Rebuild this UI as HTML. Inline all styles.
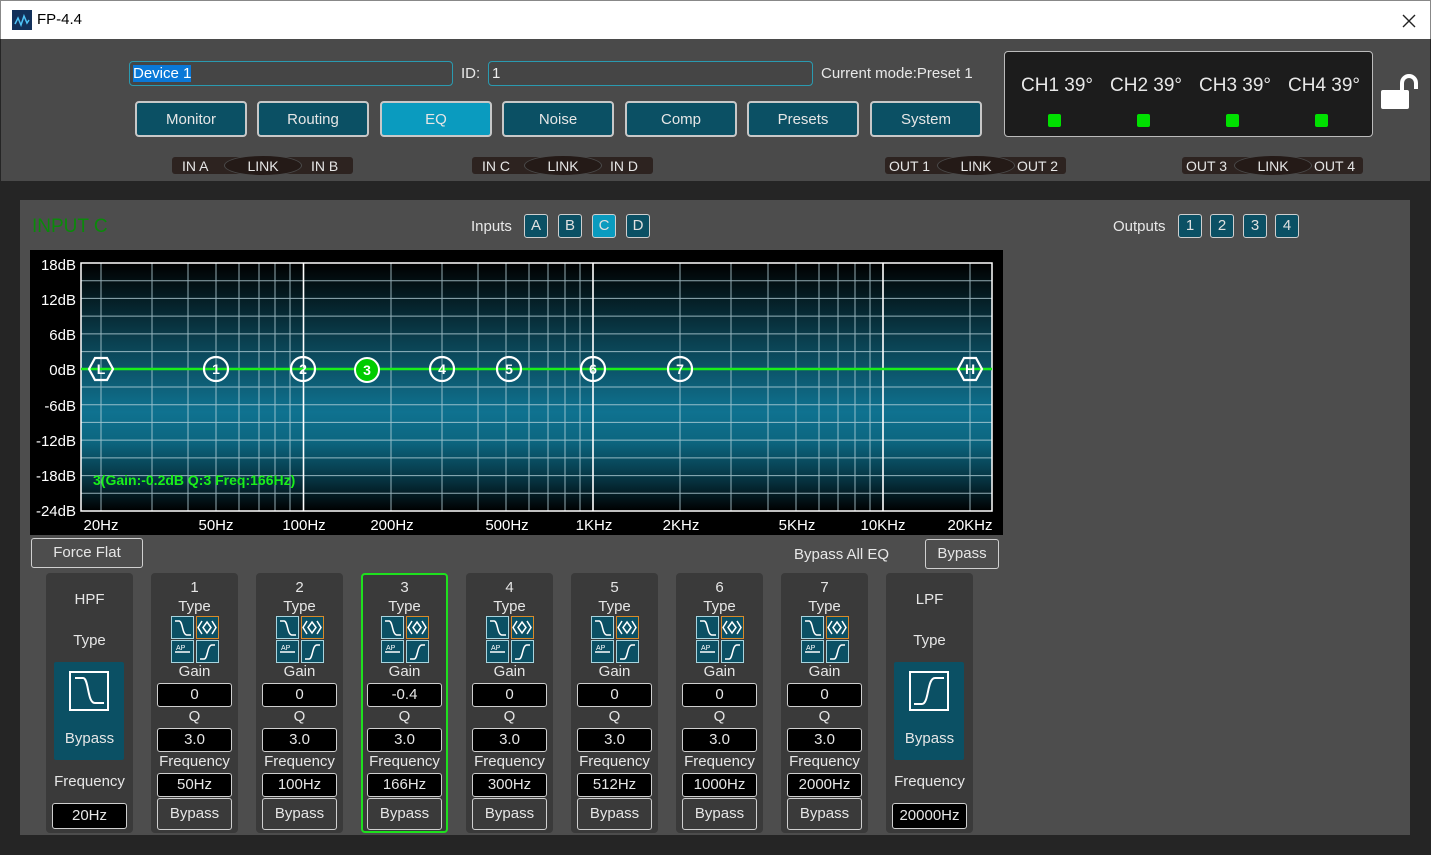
<!DOCTYPE html>
<html><head><meta charset="utf-8">
<style>
*{box-sizing:border-box;margin:0;padding:0}
body{width:1431px;height:855px;background:#252525;font-family:"Liberation Sans","Segoe UI",sans-serif;color:#e8e8e8;position:relative;overflow:hidden;font-size:14px}
.a{position:absolute}
.title{left:0;top:0;width:1431px;height:39px;background:#fff;border:1px solid #888;border-bottom:none}
.top{left:1px;top:39px;width:1429px;height:142px;background:#4a4a4a}
.inp{height:25px;border:1px solid #2a9ab0;border-radius:4px;background:#454545;font-size:15px;padding:3px 3px;color:#eee}
.nav{top:101px;width:112px;height:36px;background:#0b5064;border:2px solid #c8c8c8;border-radius:4px;text-align:center;line-height:34px;font-size:15px;color:#e6e6e6}
.pill{top:157px;height:17px;background:#2d2320;border-radius:3px;font-size:14px;line-height:18px;color:#e6e6e6}
.pill span{position:absolute;top:0}
.lk{position:absolute;top:-2px;height:21px;width:78px;background:#241a17;border-radius:50%;border:1px solid #4a4a4a;text-align:center;line-height:20px}
.main{left:20px;top:200px;width:1390px;height:635px;background:#4d4d4d}
.sq{top:214px;width:24px;height:24px;border:1.5px solid #cfcfcf;border-radius:3px;background:#0b5064;text-align:center;line-height:22px;font-size:15px;color:#e0e0e0}
.btn{border:1.5px solid #d0d0d0;border-radius:3px;text-align:center;color:#e6e6e6;font-size:15px}
.band{top:573px;width:87px;height:260px;background:#3a3a3a;border-radius:4px;text-align:center;font-size:15px;color:#e6e6e6}
.band .l{position:absolute;left:0;width:100%;line-height:20px}
.bx{position:absolute;left:6px;width:75px;height:24px;background:#000;border:1.5px solid #cfcfcf;border-radius:3px;line-height:22px;font-size:15px}
.bp{position:absolute;left:6px;top:225px;width:75px;height:32px;border:1.5px solid #cfcfcf;border-radius:3px;line-height:30px;background:#3a3a3a}
.ic{position:absolute;width:23px;height:23px;background:#0b5064;border:1.5px solid #a8d4de}
</style></head><body>
<div class="a title">
 <svg class="a" style="left:11px;top:9px" width="20" height="20"><rect width="20" height="20" fill="#12305a"/><path d="M3 14 L6 8 L9 15 L12 6 L15 13 L17 10" stroke="#4fc3f7" stroke-width="1.5" fill="none"/></svg>
 <div class="a" style="left:36px;top:10px;font-size:15px;color:#000">FP-4.4</div>
 <svg class="a" style="left:1401px;top:13px" width="14" height="14"><path d="M1 1L13 13M13 1L1 13" stroke="#222" stroke-width="1.4"/></svg>
</div>
<div class="a top"></div>
<div class="a inp" style="left:129px;top:61px;width:324px"><span style="background:#0a78d7;color:#fff">Device 1</span></div>
<div class="a" style="left:461px;top:65px;font-size:15px">ID:</div>
<div class="a inp" style="left:488px;top:61px;width:325px">1</div>
<div class="a" style="left:821px;top:65px;font-size:15px">Current mode:Preset 1</div>
<div class="a nav" style="left:135px">Monitor</div>
<div class="a nav" style="left:257px">Routing</div>
<div class="a nav" style="left:380px;background:#0a9bbf">EQ</div>
<div class="a nav" style="left:502px">Noise</div>
<div class="a nav" style="left:625px">Comp</div>
<div class="a nav" style="left:747px">Presets</div>
<div class="a nav" style="left:870px">System</div>
<div class="a pill" style="left:172px;width:181px"><span style="left:10px">IN A</span><div class="lk" style="left:52px">LINK</div><span style="left:139px">IN B</span></div>
<div class="a pill" style="left:472px;width:181px"><span style="left:10px">IN C</span><div class="lk" style="left:52px">LINK</div><span style="left:138px">IN D</span></div>
<div class="a pill" style="left:885px;width:181px"><span style="left:4px">OUT 1</span><div class="lk" style="left:52px">LINK</div><span style="left:132px">OUT 2</span></div>
<div class="a pill" style="left:1182px;width:181px"><span style="left:4px">OUT 3</span><div class="lk" style="left:52px">LINK</div><span style="left:132px">OUT 4</span></div>
<div class="a" style="left:1004px;top:51px;width:369px;height:86px;background:#1c1c1c;border:1.5px solid #bbb;border-radius:4px"></div>
<div class="a" style="left:1021px;top:75px;font-size:19px">CH1 39°</div>
<div class="a" style="left:1110px;top:75px;font-size:19px">CH2 39°</div>
<div class="a" style="left:1199px;top:75px;font-size:19px">CH3 39°</div>
<div class="a" style="left:1288px;top:75px;font-size:19px">CH4 39°</div>
<div class="a" style="left:1048px;top:114px;width:13px;height:13px;background:#00e000;border-radius:2px"></div>
<div class="a" style="left:1137px;top:114px;width:13px;height:13px;background:#00e000;border-radius:2px"></div>
<div class="a" style="left:1226px;top:114px;width:13px;height:13px;background:#00e000;border-radius:2px"></div>
<div class="a" style="left:1315px;top:114px;width:13px;height:13px;background:#00e000;border-radius:2px"></div>
<svg class="a" style="left:1378px;top:72px" width="44" height="40"><path d="M24 18 V11 A7 7 0 0 1 38 11 V17" stroke="#fff" stroke-width="4" fill="none"/><rect x="3" y="18" width="28" height="19" rx="2" fill="#fff"/></svg>

<div class="a main"></div>
<div class="a" style="left:32px;top:216px;font-size:19px;color:#0a8a0a">INPUT C</div>
<div class="a" style="left:471px;top:218px;font-size:15px">Inputs</div>
<div class="a sq" style="left:524px">A</div>
<div class="a sq" style="left:558px">B</div>
<div class="a sq" style="left:592px;background:#0a9bbf">C</div>
<div class="a sq" style="left:626px">D</div>
<div class="a" style="left:1113px;top:218px;font-size:15px">Outputs</div>
<div class="a sq" style="left:1178px">1</div>
<div class="a sq" style="left:1210px">2</div>
<div class="a sq" style="left:1243px">3</div>
<div class="a sq" style="left:1275px">4</div>

<svg class="a" style="left:30px;top:250px" width="973" height="285" font-family="Liberation Sans, sans-serif">
<defs><linearGradient id="g" x1="0" y1="0" x2="0" y2="1">
<stop offset="0" stop-color="#000"/><stop offset="0.3" stop-color="#0a3d4c"/><stop offset="0.6" stop-color="#0f7290"/><stop offset="0.72" stop-color="#0c6680"/><stop offset="0.88" stop-color="#06313e"/><stop offset="1" stop-color="#000"/></linearGradient></defs>
<rect width="973" height="285" fill="#000"/>
<rect x="51" y="13" width="911" height="248" fill="url(#g)"/>
<g stroke="#b8d4dc" stroke-width="1" opacity="0.8">
<path d="M51 30.7H962M51 48.4H962M51 66.1H962M51 83.9H962M51 101.6H962M51 137H962M51 154.7H962M51 172.4H962M51 190.1H962M51 207.9H962M51 225.6H962M51 243.3H962"/>
<path d="M71 13V261M122 13V261M158 13V261M186 13V261M209 13V261M229 13V261M245 13V261M260 13V261M361 13V261M412 13V261M448 13V261M476 13V261M499 13V261M518 13V261M535 13V261M550 13V261M650 13V261M701 13V261M738 13V261M766 13V261M789 13V261M808 13V261M825 13V261M840 13V261M940 13V261"/>
</g>
<g stroke="#fff" stroke-width="1.6"><path d="M273.5 13V261M563 13V261M853 13V261"/></g>
<rect x="51" y="13" width="911" height="248" fill="none" stroke="#fff" stroke-width="1.5"/>
<line x1="51" y1="119" x2="962" y2="119" stroke="#1aef1a" stroke-width="2.5"/>
<g fill="#fff" font-size="15" text-anchor="end"><text x="46" y="20">18dB</text><text x="46" y="55">12dB</text><text x="46" y="90">6dB</text><text x="46" y="125">0dB</text><text x="46" y="161">-6dB</text><text x="46" y="196">-12dB</text><text x="46" y="231">-18dB</text><text x="46" y="266">-24dB</text></g>
<g fill="#fff" font-size="15" text-anchor="middle"><text x="71" y="280">20Hz</text><text x="186" y="280">50Hz</text><text x="274" y="280">100Hz</text><text x="362" y="280">200Hz</text><text x="477" y="280">500Hz</text><text x="564" y="280">1KHz</text><text x="651" y="280">2KHz</text><text x="767" y="280">5KHz</text><text x="853" y="280">10KHz</text><text x="940" y="280">20KHz</text></g>
<g stroke="#fff" stroke-width="2.2" fill="none">
<polygon points="59,119 65,108 77,108 83,119 77,130 65,130"/>
<polygon points="928,119 934,108 946,108 952,119 946,130 934,130"/>
<circle cx="186" cy="119" r="12"/><circle cx="273" cy="119" r="12"/><circle cx="412" cy="119" r="12"/><circle cx="479" cy="119" r="12"/><circle cx="563" cy="119" r="12"/><circle cx="650" cy="119" r="12"/>
</g>
<circle cx="337" cy="120" r="12" fill="#0c0" stroke="#fff" stroke-width="2"/>
<g fill="#fff" font-size="14" font-weight="bold" text-anchor="middle"><text x="71" y="124">L</text><text x="940" y="124">H</text><text x="186" y="124">1</text><text x="273" y="124">2</text><text x="337" y="125">3</text><text x="412" y="124">4</text><text x="479" y="124">5</text><text x="563" y="124">6</text><text x="650" y="124">7</text></g>
<text x="63" y="235" fill="#1aef1a" font-size="14" font-weight="bold">3(Gain:-0.2dB Q:3 Freq:166Hz)</text>
</svg>

<div class="a btn" style="left:31px;top:538px;width:112px;height:30px;line-height:28px">Force Flat</div>
<div class="a" style="left:794px;top:546px;font-size:15px">Bypass All EQ</div>
<div class="a btn" style="left:925px;top:539px;width:74px;height:30px;line-height:28px">Bypass</div>

<!-- HPF -->
<div class="a band" style="left:46px">
 <div class="l" style="top:17px">HPF</div><div class="l" style="top:58px">Type</div>
 <div style="position:absolute;left:8px;top:89px;width:70px;height:98px;background:#0b5064;border-radius:2px"></div>
 <svg style="position:absolute;left:23px;top:98px" width="40" height="40"><rect x="1" y="1" width="38" height="38" fill="none" stroke="#fff" stroke-width="2"/><path d="M6 7H14C20 7 18 32 26 32H35" stroke="#fff" stroke-width="2" fill="none"/></svg>
 <div class="l" style="top:156px">Bypass</div>
 <div class="l" style="top:199px">Frequency</div>
 <div class="bx" style="top:230px;height:26px;line-height:24px">20Hz</div>
</div>
<!-- LPF -->
<div class="a band" style="left:886px">
 <div class="l" style="top:17px">LPF</div><div class="l" style="top:58px">Type</div>
 <div style="position:absolute;left:8px;top:89px;width:70px;height:98px;background:#0b5064;border-radius:2px"></div>
 <svg style="position:absolute;left:23px;top:98px" width="40" height="40"><rect x="1" y="1" width="38" height="38" fill="none" stroke="#fff" stroke-width="2"/><path d="M5 33H13C20 33 18 7 26 7H35" stroke="#fff" stroke-width="2" fill="none"/></svg>
 <div class="l" style="top:156px">Bypass</div>
 <div class="l" style="top:199px">Frequency</div>
 <div class="bx" style="top:230px;height:26px;line-height:24px">20000Hz</div>
</div>

<!-- bands -->
<div class="a band" style="left:151px"><div class="l" style="top:5px">1</div><div class="l" style="top:24px">Type</div>
<div class="ic" style="left:20px;top:43px"></div><div class="ic" style="left:45px;top:43px;border-color:#d98a2a"></div><div class="ic" style="left:20px;top:67px"></div><div class="ic" style="left:45px;top:67px"></div>
<svg style="position:absolute;left:20px;top:43px" width="50" height="48" fill="none" stroke="#fff" stroke-width="1.5"><path d="M4 5H8C12 5 11 19 16 19H20"/><path d="M31 5L27 11.5L31 18M41 5L45 11.5L41 18"/><path d="M36 6L40 11.5L36 17L32 11.5Z"/><path d="M4 36H19"/><text x="5" y="34" font-size="7" fill="#fff" stroke="none" font-family="Liberation Sans">AP</text><path d="M29 43H33C37 43 36 29 41 29H44"/></svg>
<div class="l" style="top:89px">Gain</div><div class="bx" style="top:110px">0</div><div class="l" style="top:134px">Q</div><div class="bx" style="top:155px">3.0</div><div class="l" style="top:179px">Frequency</div><div class="bx" style="top:200px">50Hz</div><div class="bp">Bypass</div></div>

<div class="a band" style="left:256px"><div class="l" style="top:5px">2</div><div class="l" style="top:24px">Type</div>
<div class="ic" style="left:20px;top:43px"></div><div class="ic" style="left:45px;top:43px;border-color:#d98a2a"></div><div class="ic" style="left:20px;top:67px"></div><div class="ic" style="left:45px;top:67px"></div>
<svg style="position:absolute;left:20px;top:43px" width="50" height="48" fill="none" stroke="#fff" stroke-width="1.5"><path d="M4 5H8C12 5 11 19 16 19H20"/><path d="M31 5L27 11.5L31 18M41 5L45 11.5L41 18"/><path d="M36 6L40 11.5L36 17L32 11.5Z"/><path d="M4 36H19"/><text x="5" y="34" font-size="7" fill="#fff" stroke="none" font-family="Liberation Sans">AP</text><path d="M29 43H33C37 43 36 29 41 29H44"/></svg>
<div class="l" style="top:89px">Gain</div><div class="bx" style="top:110px">0</div><div class="l" style="top:134px">Q</div><div class="bx" style="top:155px">3.0</div><div class="l" style="top:179px">Frequency</div><div class="bx" style="top:200px">100Hz</div><div class="bp">Bypass</div></div>

<div class="a band" style="left:361px;border:2.5px solid #1ee01e"><div class="l" style="top:3px">3</div><div class="l" style="top:22px">Type</div>
<div class="ic" style="left:18px;top:41px"></div><div class="ic" style="left:43px;top:41px;border-color:#d98a2a"></div><div class="ic" style="left:18px;top:65px"></div><div class="ic" style="left:43px;top:65px"></div>
<svg style="position:absolute;left:18px;top:41px" width="50" height="48" fill="none" stroke="#fff" stroke-width="1.5"><path d="M4 5H8C12 5 11 19 16 19H20"/><path d="M31 5L27 11.5L31 18M41 5L45 11.5L41 18"/><path d="M36 6L40 11.5L36 17L32 11.5Z"/><path d="M4 36H19"/><text x="5" y="34" font-size="7" fill="#fff" stroke="none" font-family="Liberation Sans">AP</text><path d="M29 43H33C37 43 36 29 41 29H44"/></svg>
<div class="l" style="top:87px">Gain</div><div class="bx" style="top:108px;left:4px">-0.4</div><div class="l" style="top:132px">Q</div><div class="bx" style="top:153px;left:4px">3.0</div><div class="l" style="top:177px">Frequency</div><div class="bx" style="top:198px;left:4px">166Hz</div><div class="bp" style="left:4px;top:223px">Bypass</div></div>

<div class="a band" style="left:466px"><div class="l" style="top:5px">4</div><div class="l" style="top:24px">Type</div>
<div class="ic" style="left:20px;top:43px"></div><div class="ic" style="left:45px;top:43px;border-color:#d98a2a"></div><div class="ic" style="left:20px;top:67px"></div><div class="ic" style="left:45px;top:67px"></div>
<svg style="position:absolute;left:20px;top:43px" width="50" height="48" fill="none" stroke="#fff" stroke-width="1.5"><path d="M4 5H8C12 5 11 19 16 19H20"/><path d="M31 5L27 11.5L31 18M41 5L45 11.5L41 18"/><path d="M36 6L40 11.5L36 17L32 11.5Z"/><path d="M4 36H19"/><text x="5" y="34" font-size="7" fill="#fff" stroke="none" font-family="Liberation Sans">AP</text><path d="M29 43H33C37 43 36 29 41 29H44"/></svg>
<div class="l" style="top:89px">Gain</div><div class="bx" style="top:110px">0</div><div class="l" style="top:134px">Q</div><div class="bx" style="top:155px">3.0</div><div class="l" style="top:179px">Frequency</div><div class="bx" style="top:200px">300Hz</div><div class="bp">Bypass</div></div>

<div class="a band" style="left:571px"><div class="l" style="top:5px">5</div><div class="l" style="top:24px">Type</div>
<div class="ic" style="left:20px;top:43px"></div><div class="ic" style="left:45px;top:43px;border-color:#d98a2a"></div><div class="ic" style="left:20px;top:67px"></div><div class="ic" style="left:45px;top:67px"></div>
<svg style="position:absolute;left:20px;top:43px" width="50" height="48" fill="none" stroke="#fff" stroke-width="1.5"><path d="M4 5H8C12 5 11 19 16 19H20"/><path d="M31 5L27 11.5L31 18M41 5L45 11.5L41 18"/><path d="M36 6L40 11.5L36 17L32 11.5Z"/><path d="M4 36H19"/><text x="5" y="34" font-size="7" fill="#fff" stroke="none" font-family="Liberation Sans">AP</text><path d="M29 43H33C37 43 36 29 41 29H44"/></svg>
<div class="l" style="top:89px">Gain</div><div class="bx" style="top:110px">0</div><div class="l" style="top:134px">Q</div><div class="bx" style="top:155px">3.0</div><div class="l" style="top:179px">Frequency</div><div class="bx" style="top:200px">512Hz</div><div class="bp">Bypass</div></div>

<div class="a band" style="left:676px"><div class="l" style="top:5px">6</div><div class="l" style="top:24px">Type</div>
<div class="ic" style="left:20px;top:43px"></div><div class="ic" style="left:45px;top:43px;border-color:#d98a2a"></div><div class="ic" style="left:20px;top:67px"></div><div class="ic" style="left:45px;top:67px"></div>
<svg style="position:absolute;left:20px;top:43px" width="50" height="48" fill="none" stroke="#fff" stroke-width="1.5"><path d="M4 5H8C12 5 11 19 16 19H20"/><path d="M31 5L27 11.5L31 18M41 5L45 11.5L41 18"/><path d="M36 6L40 11.5L36 17L32 11.5Z"/><path d="M4 36H19"/><text x="5" y="34" font-size="7" fill="#fff" stroke="none" font-family="Liberation Sans">AP</text><path d="M29 43H33C37 43 36 29 41 29H44"/></svg>
<div class="l" style="top:89px">Gain</div><div class="bx" style="top:110px">0</div><div class="l" style="top:134px">Q</div><div class="bx" style="top:155px">3.0</div><div class="l" style="top:179px">Frequency</div><div class="bx" style="top:200px">1000Hz</div><div class="bp">Bypass</div></div>

<div class="a band" style="left:781px"><div class="l" style="top:5px">7</div><div class="l" style="top:24px">Type</div>
<div class="ic" style="left:20px;top:43px"></div><div class="ic" style="left:45px;top:43px;border-color:#d98a2a"></div><div class="ic" style="left:20px;top:67px"></div><div class="ic" style="left:45px;top:67px"></div>
<svg style="position:absolute;left:20px;top:43px" width="50" height="48" fill="none" stroke="#fff" stroke-width="1.5"><path d="M4 5H8C12 5 11 19 16 19H20"/><path d="M31 5L27 11.5L31 18M41 5L45 11.5L41 18"/><path d="M36 6L40 11.5L36 17L32 11.5Z"/><path d="M4 36H19"/><text x="5" y="34" font-size="7" fill="#fff" stroke="none" font-family="Liberation Sans">AP</text><path d="M29 43H33C37 43 36 29 41 29H44"/></svg>
<div class="l" style="top:89px">Gain</div><div class="bx" style="top:110px">0</div><div class="l" style="top:134px">Q</div><div class="bx" style="top:155px">3.0</div><div class="l" style="top:179px">Frequency</div><div class="bx" style="top:200px">2000Hz</div><div class="bp">Bypass</div></div>
</body></html>
